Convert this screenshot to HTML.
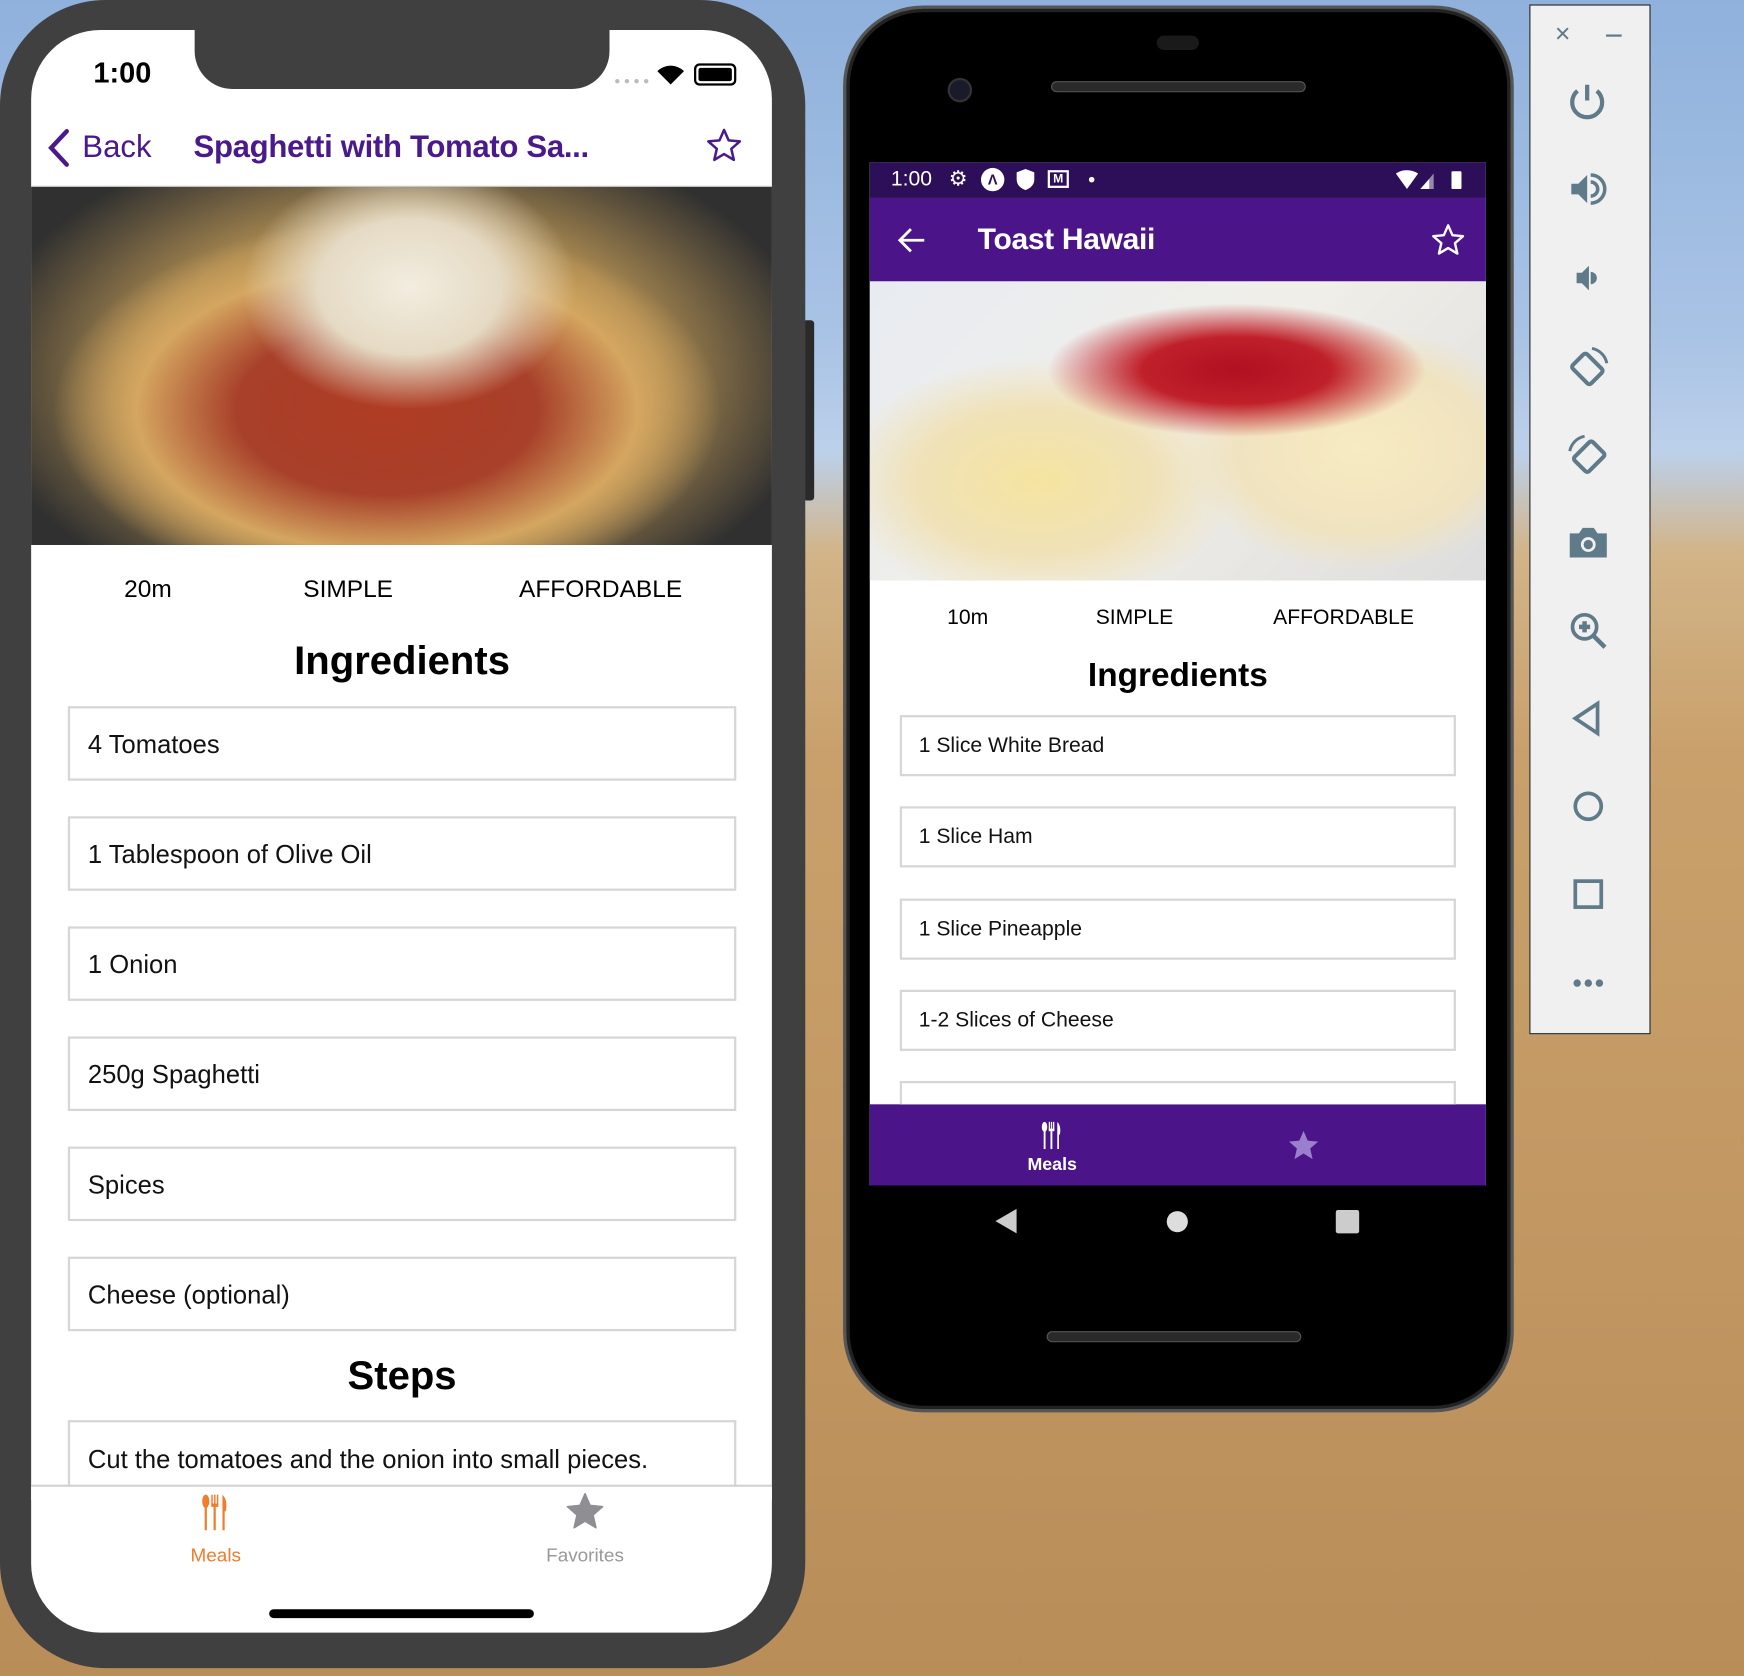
<!DOCTYPE html>
<html><head><meta charset="utf-8"><style>
*{margin:0;padding:0;box-sizing:border-box}
html,body{width:1744px;height:1676px;overflow:hidden}
body{font-family:"Liberation Sans",sans-serif;background:#c49a64}
#w{position:absolute;left:0;top:0;width:1568px;height:1507px;transform:scale(1.11224,1.1121);transform-origin:0 0;
background:linear-gradient(180deg,#8fb1dc 0%,#a9c3e5 20%,#bcd0ea 27%,#d2b488 33%,#c9a06b 45%,#c39863 70%,#b98d58 100%);overflow:hidden}
.abs{position:absolute}
.ip{left:0;top:0;width:724px;height:1500px;background:#404040;border-radius:95px}
.isc{left:28px;top:27px;width:666px;height:1441px;background:#fff;border-radius:62px;overflow:hidden}
.notch{left:175px;top:27px;width:373px;height:53px;background:#404040;border-radius:0 0 34px 34px}
.box{position:absolute;border:2px solid #d6d6d6;background:#fff}
.ib{left:61px;width:601px;height:67px;font-size:23px;padding-left:16px;line-height:64px;color:#111}
.ab{left:809px;width:500px;height:55px;font-size:19px;padding-left:15px;line-height:52px;color:#111}
.tb{position:absolute;left:1375px;top:4px;width:109px;height:926px;background:#f0f0f0;border:1px solid #222}
.tb svg{position:absolute;left:32px}
</style></head><body><div id="w">

<!-- iPhone -->
<div class="abs" style="left:722px;top:288px;width:10px;height:162px;background:#2a2a2a;border-radius:3px"></div>
<div class="abs ip"></div>
<div class="abs isc">
 <div class="abs" style="left:0;top:141px;width:666px;height:322px;background:radial-gradient(ellipse 150px 110px at 340px 90px,#f2ede0 0%,#e5dac4 55%,rgba(200,120,70,0) 100%),radial-gradient(ellipse 300px 170px at 320px 200px,#b03c24 0%,#a8402a 45%,#d4a660 75%,rgba(190,150,80,0) 100%),radial-gradient(ellipse 380px 230px at 330px 170px,#c8a25c 0%,#a88850 60%,#303030 100%),#2a2a2a"></div>
 <div class="abs" style="left:0;top:140px;width:666px;height:1px;background:#ccc"></div>
</div>
<div class="abs notch"></div>
<div class="abs" style="left:84px;top:50px;font-size:26px;font-weight:bold;color:#000">1:00</div>
<div class="abs" style="left:553px;top:71px;width:30px;height:5px;border-top:4px dotted #bbb"></div>
<svg class="abs" style="left:589px;top:56px" width="28" height="22" viewBox="0 0 28 22"><path d="M14 20 L2 8 A17 17 0 0 1 26 8 Z" fill="#000"/></svg>
<div class="abs" style="left:624px;top:57px;width:38px;height:20px;border:2px solid #000;border-radius:5px;padding:2px"><div style="width:100%;height:100%;background:#000;border-radius:2px"></div></div>
<svg class="abs" style="left:40px;top:115px" width="26" height="36" viewBox="0 0 26 36"><path d="M20 3 L6 18 L20 33" fill="none" stroke="#4a1a8c" stroke-width="4" stroke-linecap="round"/></svg>
<div class="abs" style="left:74px;top:116px;font-size:28px;color:#4a1a8c">Back</div>
<div class="abs" style="left:174px;top:116px;font-size:28px;font-weight:bold;color:#4a1a8c;letter-spacing:-0.3px">Spaghetti with Tomato Sa...</div>
<svg class="abs" style="left:634px;top:114px" width="34" height="34" viewBox="0 0 24 24"><path d="M12 2 L14.9 8.6 L22 9.3 L16.6 14 L18.2 21 L12 17.3 L5.8 21 L7.4 14 L2 9.3 L9.1 8.6 Z" fill="none" stroke="#4a1a8c" stroke-width="1.6" stroke-linejoin="round"/></svg>
<div class="abs" style="left:83px;top:517px;width:100px;text-align:center;font-size:22px">20m</div>
<div class="abs" style="left:233px;top:517px;width:160px;text-align:center;font-size:22px">SIMPLE</div>
<div class="abs" style="left:440px;top:517px;width:200px;text-align:center;font-size:22px">AFFORDABLE</div>
<div class="abs" style="left:61px;top:573px;width:601px;text-align:center;font-size:36px;font-weight:bold">Ingredients</div>
<div class="box ib" style="top:635px">4 Tomatoes</div>
<div class="box ib" style="top:734px">1 Tablespoon of Olive Oil</div>
<div class="box ib" style="top:833px">1 Onion</div>
<div class="box ib" style="top:932px">250g Spaghetti</div>
<div class="box ib" style="top:1031px">Spices</div>
<div class="box ib" style="top:1130px">Cheese (optional)</div>
<div class="abs" style="left:61px;top:1216px;width:601px;text-align:center;font-size:36px;font-weight:bold">Steps</div>
<div class="box ib" style="top:1277px;height:70px;border-bottom:none;line-height:66px">Cut the tomatoes and the onion into small pieces.</div>
<div class="abs" style="left:28px;top:1335px;width:666px;height:2px;background:#d2d2d2"></div>
<div class="abs" style="left:28px;top:1337px;width:666px;height:12px;background:#fff"></div>
<svg class="abs" style="left:181px;top:1343px" width="26" height="34" viewBox="0 0 26 34"><g fill="#f07c2c"><ellipse cx="4" cy="7" rx="3.2" ry="6"/><rect x="3" y="10" width="2" height="23"/><rect x="9" y="1" width="1.3" height="10"/><rect x="11.5" y="1" width="1.3" height="10"/><rect x="14" y="1" width="1.3" height="10"/><rect x="9" y="9" width="6.3" height="3"/><rect x="11" y="10" width="2" height="23"/><path d="M19 1 Q24 6 22 16 L21 16 L21 33 L19 33 Z"/></g></svg>
<div class="abs" style="left:144px;top:1389px;width:100px;text-align:center;font-size:17px;color:#f07c2c">Meals</div>
<svg class="abs" style="left:507px;top:1341px" width="38" height="36" viewBox="0 0 24 24"><path d="M12 1.5 L15 8.5 L22.5 9.2 L16.8 14.2 L18.5 21.8 L12 17.8 L5.5 21.8 L7.2 14.2 L1.5 9.2 L9 8.5 Z" fill="#8e8e93" stroke="#8e8e93" stroke-width="1" stroke-linejoin="round"/></svg>
<div class="abs" style="left:466px;top:1389px;width:120px;text-align:center;font-size:17px;color:#999">Favorites</div>
<div class="abs" style="left:242px;top:1447px;width:238px;height:8px;background:#000;border-radius:4px"></div>

<!-- Android -->
<div class="abs" style="left:758px;top:5px;width:603px;height:1265px;background:#000;border-radius:72px;border:3px solid #555;box-shadow:inset 0 0 0 3px #222"></div>
<div class="abs" style="left:1040px;top:32px;width:38px;height:13px;background:#1a1a1a;border-radius:7px"></div>
<div class="abs" style="left:945px;top:73px;width:229px;height:10px;background:#2a2a2a;border-radius:5px;border:1px solid #555"></div>
<div class="abs" style="left:852px;top:70px;width:22px;height:22px;background:#1a1a2a;border-radius:50%;border:2px solid #333"></div>
<div class="abs" style="left:941px;top:1197px;width:229px;height:10px;background:#2a2a2a;border-radius:5px;border:1px solid #555"></div>
<div class="abs" style="left:782px;top:146px;width:554px;height:920px;background:#fff;overflow:hidden">
 <div class="abs" style="left:0;top:0;width:554px;height:32px;background:#2d0e58"></div>
 <div class="abs" style="left:0;top:32px;width:554px;height:75px;background:#4b1589"></div>
 <div class="abs" style="left:0;top:107px;width:554px;height:269px;background:radial-gradient(ellipse 170px 60px at 330px 80px,#b01020 0%,#c0202a 50%,rgba(200,40,40,0) 100%),radial-gradient(ellipse 180px 110px at 150px 180px,#f5e4a0 0%,#f0e2b8 60%,rgba(240,230,200,0) 100%),radial-gradient(ellipse 160px 110px at 440px 150px,#f7ebc2 0%,#f0e3c0 70%,rgba(240,230,200,0) 100%),linear-gradient(135deg,#e8ecf2 0%,#f0eee8 50%,#ddd 100%)"></div>
 <div class="abs" style="left:0;top:847px;width:554px;height:73px;background:#4b1589"></div>
</div>
<div class="abs" style="left:801px;top:151px;font-size:19px;color:#fff">1:00</div>
<div class="abs" style="left:853px;top:150px;font-size:19px;color:#fff">⚙</div>
<div class="abs" style="left:882px;top:151px;width:21px;height:21px;border-radius:50%;background:#fff;color:#2d0e58;font-size:13px;font-weight:bold;text-align:center;line-height:21px">Λ</div>
<svg class="abs" style="left:914px;top:152px" width="16" height="19" viewBox="0 0 16 19"><path d="M8 0 L16 3 L16 9 Q16 16 8 19 Q0 16 0 9 L0 3 Z" fill="#fff"/></svg>
<div class="abs" style="left:942px;top:153px;width:19px;height:16px;border:2px solid #fff;background:#2d0e58;font-size:11px;color:#fff;font-weight:bold;text-align:center;line-height:12px">M</div>
<div class="abs" style="left:979px;top:159px;width:5px;height:5px;border-radius:50%;background:#fff"></div>
<svg class="abs" style="left:1255px;top:153px" width="62" height="18" viewBox="0 0 62 18"><path d="M10 17 L0 3 Q10 -3 20 3 Z" fill="#fff"/><path d="M22 17 L34 3 L34 17 Z" fill="#fff" opacity=".5"/><path d="M22 17 L30 8 L30 17 Z" fill="#fff"/><rect x="50" y="1" width="9" height="16" rx="1" fill="#fff"/></svg>
<svg class="abs" style="left:806px;top:203px" width="28" height="26" viewBox="0 0 28 26"><path d="M25 13 H4 M13 3 L3 13 L13 23" fill="none" stroke="#fff" stroke-width="2.5"/></svg>
<div class="abs" style="left:879px;top:200px;font-size:27px;font-weight:bold;color:#fff;letter-spacing:-0.3px">Toast Hawaii</div>
<svg class="abs" style="left:1286px;top:200px" width="32" height="32" viewBox="0 0 24 24"><path d="M12 2 L14.9 8.6 L22 9.3 L16.6 14 L18.2 21 L12 17.3 L5.8 21 L7.4 14 L2 9.3 L9.1 8.6 Z" fill="none" stroke="#fff" stroke-width="1.6" stroke-linejoin="round"/></svg>
<div class="abs" style="left:820px;top:545px;width:100px;text-align:center;font-size:19px">10m</div>
<div class="abs" style="left:950px;top:545px;width:140px;text-align:center;font-size:19px">SIMPLE</div>
<div class="abs" style="left:1118px;top:545px;width:180px;text-align:center;font-size:19px">AFFORDABLE</div>
<div class="abs" style="left:809px;top:591px;width:500px;text-align:center;font-size:30px;font-weight:bold">Ingredients</div>
<div class="box ab" style="top:643px">1 Slice White Bread</div>
<div class="box ab" style="top:725px">1 Slice Ham</div>
<div class="box ab" style="top:808px">1 Slice Pineapple</div>
<div class="box ab" style="top:890px">1-2 Slices of Cheese</div>
<div class="box ab" style="top:972px;height:21px;border-bottom:none"></div>
<svg class="abs" style="left:935px;top:1008px" width="22" height="26" viewBox="0 0 26 34"><g fill="#fff"><ellipse cx="4" cy="7" rx="3.2" ry="6"/><rect x="3" y="10" width="2.2" height="23"/><rect x="9" y="1" width="1.5" height="10"/><rect x="11.5" y="1" width="1.5" height="10"/><rect x="14" y="1" width="1.5" height="10"/><rect x="9" y="9" width="6.5" height="3"/><rect x="11" y="10" width="2.2" height="23"/><path d="M19 1 Q24 6 22 16 L21 16 L21 33 L19 33 Z"/></g></svg>
<div class="abs" style="left:906px;top:1039px;width:80px;text-align:center;font-size:16px;font-weight:bold;color:#fff">Meals</div>
<svg class="abs" style="left:1156px;top:1015px" width="32" height="30" viewBox="0 0 24 24"><path d="M12 1.5 L15 8.5 L22.5 9.2 L16.8 14.2 L18.5 21.8 L12 17.8 L5.5 21.8 L7.2 14.2 L1.5 9.2 L9 8.5 Z" fill="#9a80cc"/></svg>
<svg class="abs" style="left:893px;top:1086px" width="24" height="24" viewBox="0 0 24 24"><path d="M21 1 L21 23 L2 12 Z" fill="#ccc"/></svg>
<div class="abs" style="left:1049px;top:1089px;width:19px;height:19px;border-radius:50%;background:#ddd"></div>
<div class="abs" style="left:1201px;top:1088px;width:21px;height:21px;border-radius:2px;background:#ccc"></div>

<!-- toolbar -->
<div class="tb">
 <div class="abs" style="left:22px;top:12px;font-size:24px;color:#5f7a88">×</div>
 <div class="abs" style="left:68px;top:26px;width:14px;height:2px;background:#5f7a88"></div>
 <svg style="top:68px" width="38" height="38" viewBox="0 0 24 24"><path d="M12 2 V11 M6.5 5.5 A8.5 8.5 0 1 0 17.5 5.5" fill="none" stroke="#5f7a88" stroke-width="2.4"/></svg>
 <svg style="top:146px" width="38" height="38" viewBox="0 0 24 24"><path d="M3 9 H7 L12 4 V20 L7 15 H3 Z" fill="#5f7a88"/><path d="M14 8 A4 4 0 0 1 14 16 M14 4 A8 8 0 0 1 14 20" fill="none" stroke="#5f7a88" stroke-width="2"/></svg>
 <svg style="top:226px" width="38" height="38" viewBox="0 0 24 24"><path d="M6 9 H9 L13 5 V19 L9 15 H6 Z" fill="#5f7a88"/><path d="M14 8.5 A3.5 3.5 0 0 1 14 15.5 Z" fill="#5f7a88"/></svg>
 <svg style="top:305px" width="40" height="40" viewBox="0 0 24 24"><rect x="6" y="6" width="11" height="14" rx="1.5" transform="rotate(-45 11.5 13)" fill="none" stroke="#5f7a88" stroke-width="2.2"/><path d="M14 2 A10 10 0 0 1 22 10" fill="none" stroke="#5f7a88" stroke-width="1.6"/></svg>
 <svg style="top:384px" width="40" height="40" viewBox="0 0 24 24"><rect x="7" y="6" width="11" height="14" rx="1.5" transform="rotate(45 12.5 13)" fill="none" stroke="#5f7a88" stroke-width="2.2"/><path d="M10 2 A10 10 0 0 0 2 10" fill="none" stroke="#5f7a88" stroke-width="1.6"/></svg>
 <svg style="top:463px" width="40" height="40" viewBox="0 0 24 24"><path d="M2 7 H7 L9 4 H15 L17 7 H22 V20 H2 Z" fill="#5f7a88"/><circle cx="12" cy="13" r="4" fill="#f0f0f0"/><circle cx="12" cy="13" r="2.5" fill="#5f7a88"/></svg>
 <svg style="top:542px" width="40" height="40" viewBox="0 0 24 24"><circle cx="10" cy="10" r="6.5" fill="none" stroke="#5f7a88" stroke-width="2"/><path d="M15 15 L21 21 M10 7 V13 M7 10 H13" stroke="#5f7a88" stroke-width="2.4"/></svg>
 <svg style="top:621px" width="40" height="40" viewBox="0 0 24 24"><path d="M17 4 V20 L5 12 Z" fill="none" stroke="#5f7a88" stroke-width="2"/></svg>
 <svg style="top:700px" width="40" height="40" viewBox="0 0 24 24"><circle cx="12" cy="12" r="7" fill="none" stroke="#5f7a88" stroke-width="2"/></svg>
 <svg style="top:779px" width="40" height="40" viewBox="0 0 24 24"><rect x="5" y="5" width="14" height="14" fill="none" stroke="#5f7a88" stroke-width="2"/></svg>
 <svg style="top:859px" width="40" height="40" viewBox="0 0 24 24"><circle cx="6" cy="12" r="2" fill="#5f7a88"/><circle cx="12" cy="12" r="2" fill="#5f7a88"/><circle cx="18" cy="12" r="2" fill="#5f7a88"/></svg>
</div>
</div></body></html>
